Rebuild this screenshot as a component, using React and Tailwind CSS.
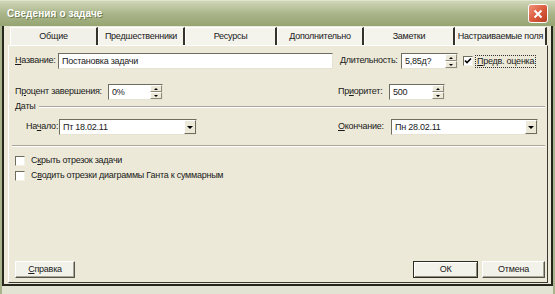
import React from "react";

const Tri = ({ up }) =>
  up ? (
    <div className="w-0 h-0 border-l-[2px] border-r-[2px] border-b-[2px] border-l-transparent border-r-transparent border-b-black" />
  ) : (
    <div className="w-0 h-0 border-l-[3px] border-r-[3px] border-t-[3px] border-l-transparent border-r-transparent border-t-black" />
  );

const Spin = () => (
  <div className="w-[12px] flex flex-col">
    <div className="flex-1 bg-[#ece9d8] border border-t-white border-l-white border-b-[#8d8a7a] border-r-[#8d8a7a] flex items-center justify-center">
      <Tri up />
    </div>
    <div className="flex-1 bg-[#ece9d8] border border-t-white border-l-white border-b-[#8d8a7a] border-r-[#8d8a7a] flex items-center justify-center">
      <div className="w-0 h-0 border-l-[2px] border-r-[2px] border-t-[2px] border-l-transparent border-r-transparent border-t-black" />
    </div>
  </div>
);

const Drop = () => (
  <div className="w-[12px] bg-[#ece9d8] border border-t-white border-l-white border-b-[#6e6b5f] border-r-[#6e6b5f] flex items-center justify-center">
    <Tri />
  </div>
);

const Field = ({ w, text, spin, drop }) => (
  <div
    className={
      "h-[16px] bg-white border border-t-[#6f6c60] border-l-[#6f6c60] border-b-[#e6e3d3] border-r-[#e6e3d3] flex items-stretch " +
      w
    }
  >
    <div className="flex-1 pl-[3px] flex items-center leading-none whitespace-nowrap">{text}</div>
    {spin && <Spin />}
    {drop && <Drop />}
  </div>
);

const Check = ({ checked }) => (
  <div className="w-[10px] h-[10px] bg-white border border-t-[#6f6c60] border-l-[#6f6c60] border-b-[#f4f2e6] border-r-[#f4f2e6] flex items-center justify-center">
    {checked && (
      <svg width="8" height="8" viewBox="0 0 8 8">
        <path d="M1 3.5 L3 5.5 L7 1.5" stroke="black" strokeWidth="1.6" fill="none" />
      </svg>
    )}
  </div>
);

const Btn = ({ w, children, def }) => (
  <div
    className={
      "h-[17px] flex items-center justify-center leading-none bg-[#f3f2ea] " +
      (def
        ? "border border-[#2c2c24] shadow-[inset_1px_1px_0_#ffffff,inset_-1px_-1px_0_#8d8a7a] "
        : "border border-t-white border-l-white border-b-[#55534a] border-r-[#55534a] shadow-[inset_-1px_-1px_0_#a7a596] ") +
      w
    }
  >
    {children}
  </div>
);

const tabs = [
  ["Общие", "w-[88px]"],
  ["Предшественники", "w-[87px]"],
  ["Ресурсы", "w-[92px]"],
  ["Дополнительно", "w-[87px]"],
  ["Заметки", "w-[91px]"],
  ["Настраиваемые поля", "w-[92px]"],
];

export default function App() {
  return (
    <div className="w-[555px] h-[294px] bg-[#a9b48c] flex flex-col overflow-hidden font-['Liberation_Sans',Arial,sans-serif] text-[9px] tracking-[-0.25px] text-[#1a1a1a]">
      {/* title bar */}
      <div className="h-[26px] shrink-0 bg-gradient-to-b from-[#cfd6b8] via-[#aab68a] to-[#96a472] border-t border-[#dfe5cc] flex items-center justify-between pl-[7px] pr-[7px]">
        <span className="text-white font-bold text-[10px] tracking-[0.1px] [text-shadow:1px_1px_0_#6f7d50]">
          Сведения о задаче
        </span>
        <div className="w-[20px] h-[19px] rounded-[3px] border border-white bg-gradient-to-br from-[#f0937a] via-[#db5c3e] to-[#b83d22] flex items-center justify-center">
          <svg width="10" height="10" viewBox="0 0 10 10">
            <path d="M1.5 1.5 L8.5 8.5 M8.5 1.5 L1.5 8.5" stroke="white" strokeWidth="2" />
          </svg>
        </div>
      </div>

      {/* body */}
      <div className="flex-1 mx-[2px] border-l-2 border-r-2 border-b-2 border-[#25261c] bg-[#ece9d8] flex flex-col">
        {/* tabs */}
        <div className="flex ml-[6px] mt-[1px] h-[18px]">
          {tabs.map(([t, w], i) => (
            <div
              key={t}
              className={
                "flex items-center justify-center leading-none whitespace-nowrap border-t border-l border-t-white border-l-white border-r-2 border-r-[#333329] " +
                (i === 0 ? "bg-[#f2f1e9] " : "bg-[#f4f3ec] ") +
                w
              }
            >
              {t}
            </div>
          ))}
        </div>

        {/* panel */}
        <div className="flex-1 ml-[4px] mr-[3px] mb-[1px] border border-l-white border-t-white border-r-[#3a3a30] border-b-[#3a3a30] bg-[#ece9d8] flex flex-col pl-[6px]">
          {/* row 1 */}
          <div className="flex items-center mt-[7px] h-[16px]">
            <div className="w-[43px] whitespace-nowrap">
              <u>Н</u>азвание:
            </div>
            <Field w="w-[275px]" text="Постановка задачи" />
            <div className="ml-[7px] w-[61px] whitespace-nowrap">
              <u>Д</u>лительность:
            </div>
            <Field w="w-[57px]" text="5,85д?" spin />
            <div className="ml-[5px]">
              <Check checked />
            </div>
            <div className="ml-[2px] px-[1px] border border-dotted border-[#333] whitespace-nowrap leading-[11px]">
              <u>П</u>редв. оценка
            </div>
          </div>

          {/* row 2 */}
          <div className="flex items-center mt-[15px] h-[16px]">
            <div className="w-[93px] whitespace-nowrap">
              П<u>р</u>оцент завершения:
            </div>
            <Field w="w-[55px]" text="0%" spin />
            <div className="ml-[175px] w-[51px] whitespace-nowrap">
              Пр<u>и</u>оритет:
            </div>
            <Field w="w-[56px]" text="500" spin />
          </div>

          {/* dates header */}
          <div className="flex items-center mt-[1px] h-[12px]">
            <span className="whitespace-nowrap">Даты</span>
            <div className="flex-1 ml-[3px] mr-[2px] h-[2px] border-t border-[#aca899] border-b border-b-white" />
          </div>

          {/* row 3 */}
          <div className="flex items-center mt-[6px] h-[16px] ml-[11px]">
            <div className="w-[33px] whitespace-nowrap">
              На<u>ч</u>ало:
            </div>
            <Field w="w-[138px]" text="Пт 18.02.11" drop />
            <div className="ml-[141px] w-[53px] whitespace-nowrap">
              <u>О</u>кончание:
            </div>
            <Field w="w-[147px]" text="Пн 28.02.11" drop />
          </div>

          {/* separator */}
          <div className="-ml-[3px] mr-[2px] mt-[10px] h-[2px] border-t border-[#aca899] border-b border-b-white" />

          {/* checkboxes */}
          <div className="flex items-center mt-[8px] h-[12px]">
            <Check />
            <span className="ml-[6px] whitespace-nowrap">
              С<u>к</u>рыть отрезок задачи
            </span>
          </div>
          <div className="flex items-center mt-[3px] h-[12px]">
            <Check />
            <span className="ml-[6px] whitespace-nowrap">
              С<u>в</u>одить отрезки диаграммы Ганта к суммарным
            </span>
          </div>

          {/* buttons */}
          <div className="mt-auto mb-[4px] flex items-center">
            <Btn w="w-[60px]">
              <span>
                <u>С</u>правка
              </span>
            </Btn>
            <div className="ml-auto flex gap-[4px] mr-[2px]">
              <Btn w="w-[65px]" def>
                ОК
              </Btn>
              <Btn w="w-[63px]">Отмена</Btn>
            </div>
          </div>
        </div>
      </div>
      <div className="h-[8px] shrink-0 mx-[2px] bg-[#e3e3d3]" />
    </div>
  );
}
